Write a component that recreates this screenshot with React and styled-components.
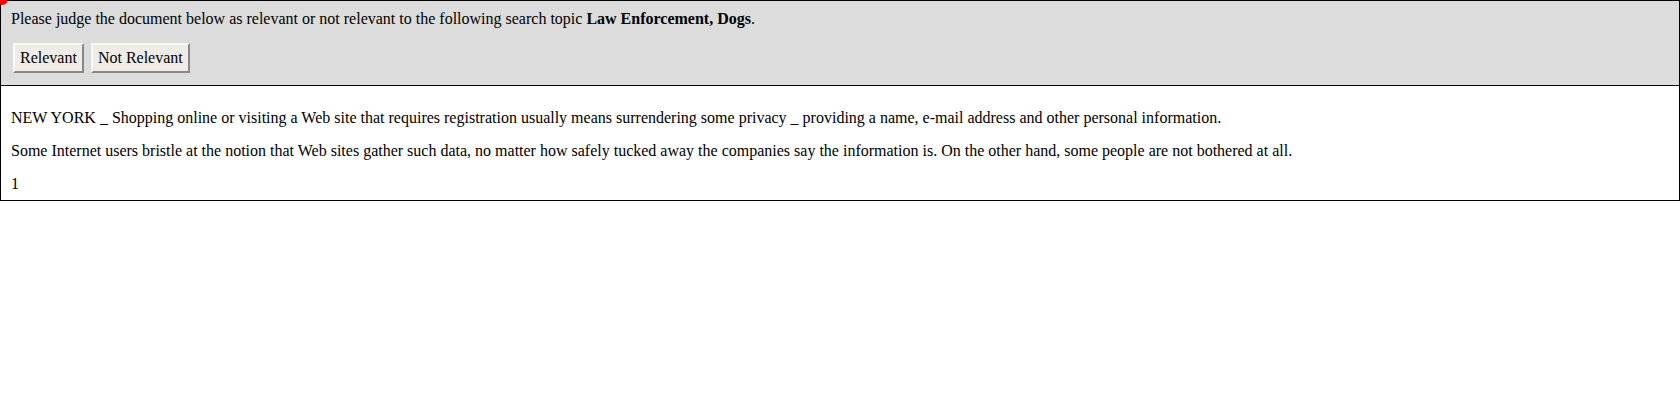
import React from 'react'
import styled, { createGlobalStyle } from 'styled-components'

const GlobalStyle = createGlobalStyle`
  body {
    margin: 0;
    background: #fff;
    font-family: "Liberation Serif", "Times New Roman", serif;
    font-size: 16px;
    color: #000;
  }
`

const Frame = styled.div`
  position: relative;
  border: 1px solid #000;
  width: 1680px;
  box-sizing: border-box;
`

const Dot = styled.span`
  position: absolute;
  left: -5px;
  top: -8px;
  width: 12px;
  height: 12px;
  border-radius: 50%;
  background: #ff0000;
`

const Header = styled.div`
  background: #dcdcdc;
  border-bottom: 1px solid #000;
  padding: 9px 10px 12px;
`

const Prompt = styled.p`
  margin: 0 0 15px;
  line-height: 18px;
`

const Buttons = styled.div`
  display: flex;
  gap: 7px;
  padding-left: 2px;
`

const JudgeButton = styled.button`
  font-family: "Liberation Serif", "Times New Roman", serif;
  font-size: 16px;
  color: #000;
  background: #efece8;
  height: 30px;
  padding: 0 5px;
  border: 2px solid;
  border-color: #f8f8f6 #888 #888 #f8f8f6;
  cursor: pointer;
`

const Document = styled.div`
  padding: 15px 10px 7px;
`

const Para = styled.p`
  margin: 8px 0 15px;
  line-height: 18px;
  &:last-child {
    margin-bottom: 0;
  }
`

export default function App() {
  return (
    <>
      <GlobalStyle />
      <Frame>
        <Dot />
        <Header>
          <Prompt>
            Please judge the document below as relevant or not relevant to the following search topic <b>Law Enforcement, Dogs</b>.
          </Prompt>
          <Buttons>
            <JudgeButton>Relevant</JudgeButton>
            <JudgeButton>Not Relevant</JudgeButton>
          </Buttons>
        </Header>
        <Document>
          <Para>NEW YORK _ Shopping online or visiting a Web site that requires registration usually means surrendering some privacy _ providing a name, e-mail address and other personal information.</Para>
          <Para>Some Internet users bristle at the notion that Web sites gather such data, no matter how safely tucked away the companies say the information is. On the other hand, some people are not bothered at all.</Para>
          <Para>1</Para>
        </Document>
      </Frame>
    </>
  )
}
